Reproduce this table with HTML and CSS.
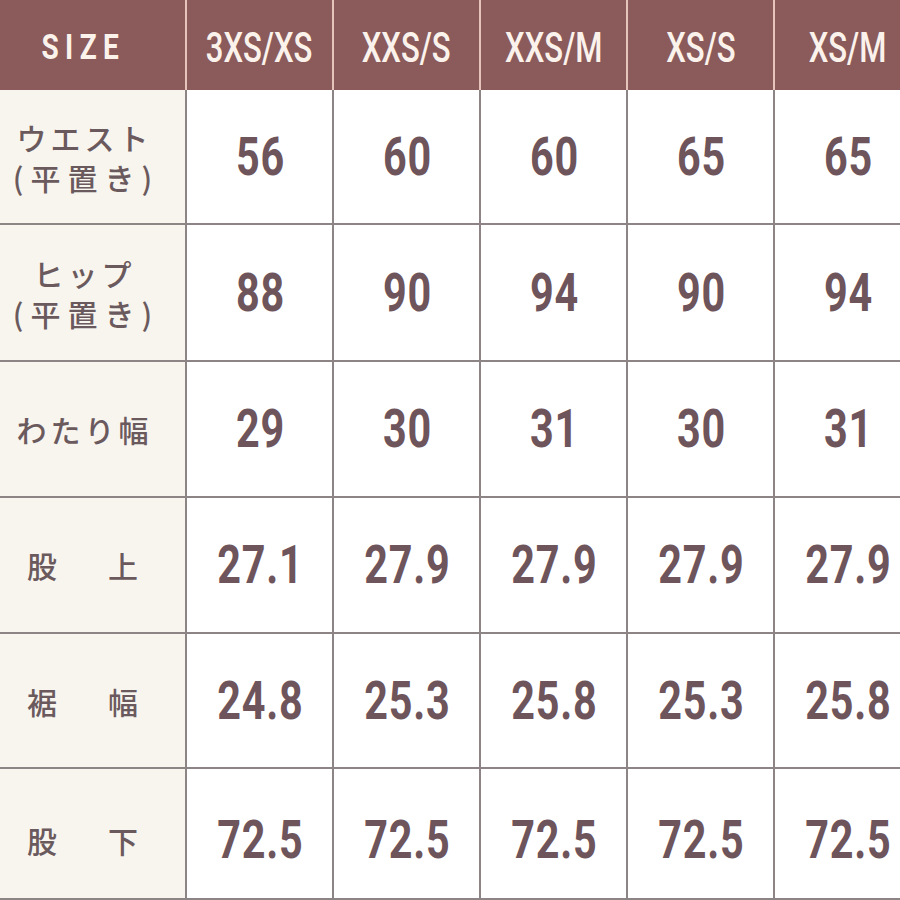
FILE: index.html
```html
<!DOCTYPE html>
<html lang="ja">
<head>
<meta charset="utf-8">
<title>SIZE</title>
<link rel="stylesheet" href="styles.css">
</head>
<body>
<div class="table">
  <div class="hd hd-first"><span class="size">SIZE</span></div>
  <div class="hd"><span class="sq">3XS/XS</span></div>
  <div class="hd"><span class="sq">XXS/S</span></div>
  <div class="hd"><span class="sq">XXS/M</span></div>
  <div class="hd"><span class="sq">XS/S</span></div>
  <div class="hd"><span class="sq">XS/M</span></div>

  <div class="lb"><span class="l1">ウエスト</span><span class="l2">(平置き)</span></div>
  <div class="cell"><span class="num">56</span></div><div class="cell"><span class="num">60</span></div><div class="cell"><span class="num">60</span></div><div class="cell"><span class="num">65</span></div><div class="cell"><span class="num">65</span></div>

  <div class="lb"><span class="l1">ヒップ</span><span class="l2">(平置き)</span></div>
  <div class="cell"><span class="num">88</span></div><div class="cell"><span class="num">90</span></div><div class="cell"><span class="num">94</span></div><div class="cell"><span class="num">90</span></div><div class="cell"><span class="num">94</span></div>

  <div class="lb"><span class="l1">わたり幅</span></div>
  <div class="cell"><span class="num">29</span></div><div class="cell"><span class="num">30</span></div><div class="cell"><span class="num">31</span></div><div class="cell"><span class="num">30</span></div><div class="cell"><span class="num">31</span></div>

  <div class="lb"><span class="pair"><span>股</span><span>上</span></span></div>
  <div class="cell"><span class="num">27.1</span></div><div class="cell"><span class="num">27.9</span></div><div class="cell"><span class="num">27.9</span></div><div class="cell"><span class="num">27.9</span></div><div class="cell"><span class="num">27.9</span></div>

  <div class="lb"><span class="pair"><span>裾</span><span>幅</span></span></div>
  <div class="cell"><span class="num">24.8</span></div><div class="cell"><span class="num">25.3</span></div><div class="cell"><span class="num">25.8</span></div><div class="cell"><span class="num">25.3</span></div><div class="cell"><span class="num">25.8</span></div>

  <div class="lb last"><span class="pair"><span>股</span><span>下</span></span></div>
  <div class="cell last"><span class="num">72.5</span></div><div class="cell last"><span class="num">72.5</span></div><div class="cell last"><span class="num">72.5</span></div><div class="cell last"><span class="num">72.5</span></div><div class="cell last"><span class="num">72.5</span></div>
</div>
</body>
</html>
```
FILE: styles.css
```css
html, body {
  margin: 0;
  padding: 0;
  background: #ffffff;
  overflow: hidden;
}

.table {
  display: grid;
  grid-template-columns: 187px repeat(5, 147px);
  grid-template-rows: 90px 135px 137px 136px 136px 135px 131px;
  width: 922px;
}

.table > div {
  box-sizing: border-box;
  display: flex;
  align-items: center;
  justify-content: center;
}

.hd {
  background: #8a5b5a;
  color: #fbf2ec;
  border-right: 2px solid #e6c3bb;
  font-family: Roboto, "DejaVu Sans", sans-serif;
  font-weight: 500;
  font-size: 42px;
  padding-top: 4px;
}

.sq {
  display: inline-block;
  transform: scaleX(0.74);
}

.hd-first {
  padding-right: 27px;
}

.size {
  display: inline-block;
  font-size: 35px;
  font-weight: bold;
  letter-spacing: 8px;
  margin-right: -8px;
  transform: scaleX(0.8);
}

.lb {
  background: #f8f5ef;
  border-right: 2px solid #8c8485;
  border-bottom: 2px solid #8c8485;
  flex-direction: column;
  padding-right: 20px;
  color: #6b5a5d;
  font-family: "Noto Sans CJK JP", sans-serif;
  font-weight: 500;
  font-size: 30px;
  line-height: 40px;
}

.l1 {
  letter-spacing: 4px;
  margin-right: -4px;
}

.l2 {
  letter-spacing: 7px;
  margin-right: -7px;
}

.pair {
  display: flex;
  justify-content: space-between;
  width: 111px;
}

.cell {
  background: #ffffff;
  border-right: 2px solid #8c8485;
  border-bottom: 2px solid #8c8485;
  color: #6e545b;
  font-family: Roboto, "DejaVu Sans", sans-serif;
  font-size: 53px;
  font-weight: bold;
}

.num {
  display: inline-block;
  letter-spacing: 1px;
  margin-right: -1px;
  transform: scaleX(0.78);
}

.last {
  padding-top: 12px;
}
```
